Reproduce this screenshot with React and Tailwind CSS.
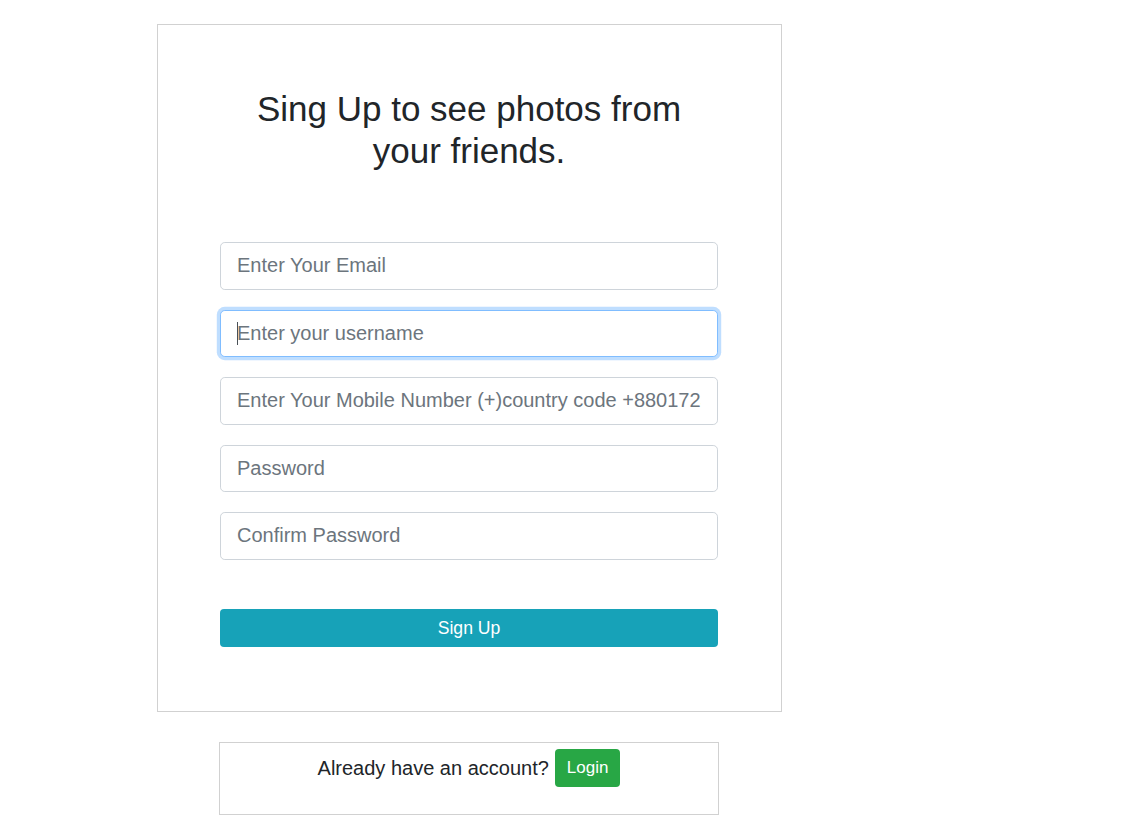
export default function App() {
  const fields = [
    { type: "email", placeholder: "Enter Your Email" },
    { type: "text", placeholder: "Enter your username", focused: true },
    { type: "text", placeholder: "Enter Your Mobile Number (+)country code +8801723456789" },
    { type: "password", placeholder: "Password" },
    { type: "password", placeholder: "Confirm Password" },
  ];

  return (
    <div className="min-h-screen bg-white pt-[24px] pl-[157px] font-['Liberation_Sans',Arial,sans-serif] text-[#212529]">
      <div className="w-[625px] border border-[#d1d1d1] pt-[63px] pb-[64px] pl-[62px]">
        <h2 className="w-[498px] text-center text-[35px] leading-[1.2] font-normal">
          Sing Up to see photos from your friends.
        </h2>

        <form className="w-[498px] mt-[70px] flex flex-col">
          <div className="flex flex-col gap-[20px]">
            {fields.map((f, i) => (
              <div key={i} className="relative">
                <input
                  type={f.type}
                  placeholder={f.placeholder}
                  readOnly
                  className={`w-full h-[47.5px] px-4 text-[20px] rounded-[4.8px] border bg-white outline-none placeholder:text-[#6c757d] ${
                    f.focused
                      ? "border-[#80bdff] shadow-[0_0_0_3.2px_rgba(0,123,255,0.25)]"
                      : "border-[#ced4da]"
                  }`}
                />
                {f.focused && (
                  <span className="absolute left-[17px] top-[12px] w-px h-[23px] bg-[#495057]"></span>
                )}
              </div>
            ))}
          </div>

          <button
            type="button"
            className="mt-[49.5px] h-[38px] w-full rounded-[4px] bg-[#17a2b8] text-white text-[17.6px]"
          >
            Sign Up
          </button>
        </form>
      </div>

      <div className="ml-[62px] mt-[30px] w-[500px] h-[73px] border border-[#d1d1d1] pt-[6px] flex justify-center items-start gap-[6px]">
        <span className="text-[20px] leading-[38px]">Already have an account?</span>
        <button
          type="button"
          className="h-[38px] px-[12px] rounded-[4px] bg-[#28a745] text-white text-[17px]"
        >
          Login
        </button>
      </div>
    </div>
  );
}
